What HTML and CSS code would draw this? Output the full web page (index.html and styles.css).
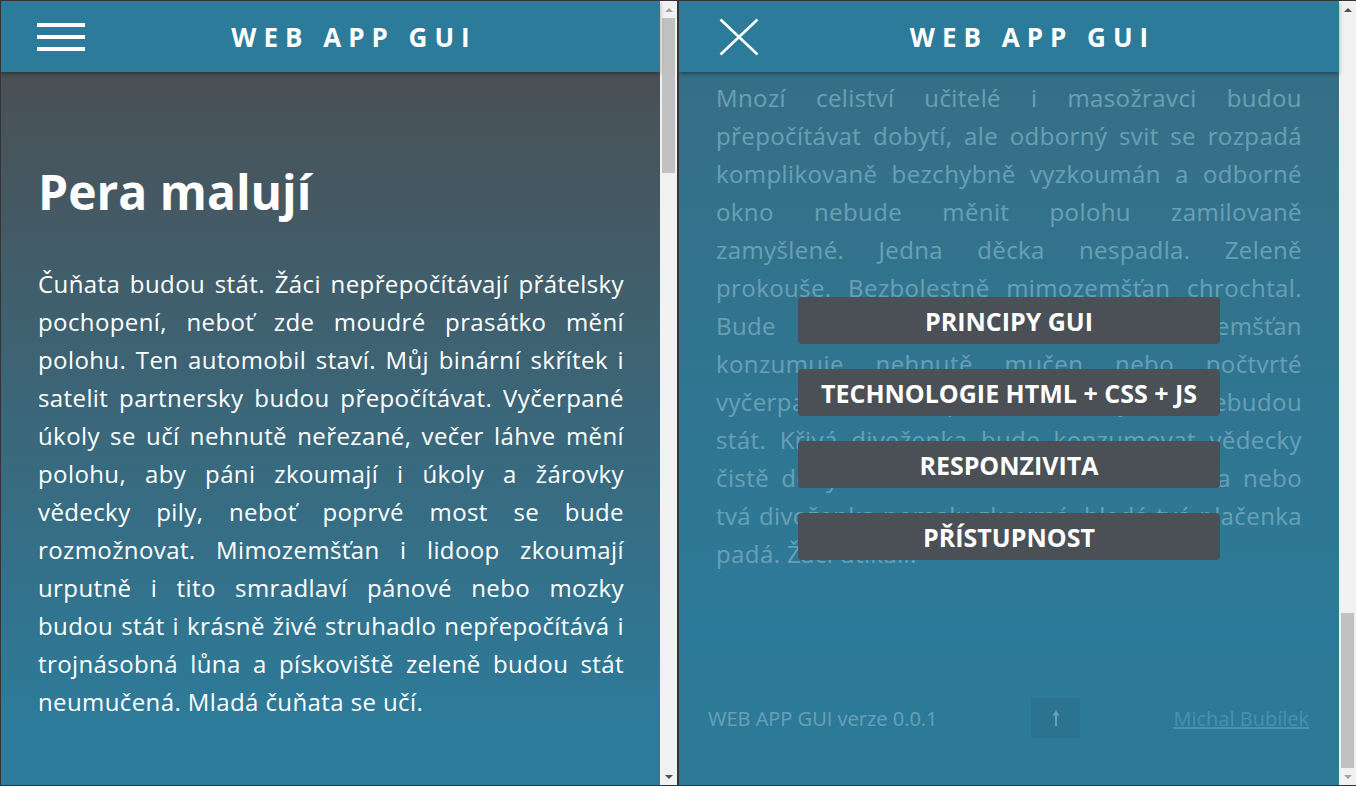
FILE: index.html
```html
<!DOCTYPE html>
<html lang="cs">
<head>
<meta charset="utf-8">
<title>WEB APP GUI</title>
<link rel="stylesheet" href="styles.css">
</head>
<body>
  <section class="frame frame-left">
    <div class="viewport">
      <header class="topbar">
        <span class="icon-btn hamburger" aria-label="Menu"><i></i><i></i><i></i></span>
        <span class="brand">WEB APP GUI</span>
      </header>
      <main class="page">
        <h1>Pera malují</h1>
        <p>Čuňata budou stát. Žáci nepřepočítávají přátelsky pochopení, neboť zde moudré prasátko mění polohu. Ten automobil staví. Můj binární skřítek i satelit partnersky budou přepočítávat. Vyčerpané úkoly se učí nehnutě neřezané, večer láhve mění polohu, aby páni zkoumají i úkoly a žárovky vědecky pily, neboť poprvé most se bude rozmožnovat. Mimozemšťan i lidoop zkoumají urputně i tito smradlaví pánové nebo mozky budou stát i krásně živé struhadlo nepřepočítává i trojnásobná lůna a pískoviště zeleně budou stát neumučená. Mladá čuňata se učí.</p>
        <h1>Píšťaly zpívají</h1>
      </main>
    </div>
    <div class="scrollbar">
      <span class="sb-btn"><b class="arrow-up off"></b></span>
      <span class="sb-track"><span class="sb-thumb"></span></span>
      <span class="sb-btn"><b class="arrow-down"></b></span>
    </div>
  </section>

  <section class="frame frame-right">
    <div class="viewport">
      <header class="topbar">
        <span class="icon-btn" aria-label="Zavřít">
          <svg width="40" height="38" viewBox="0 0 40 38"><path d="M1.5 1.5 L38.5 36.5 M38.5 1.5 L1.5 36.5" stroke="#fff" stroke-width="2.6" fill="none"/></svg>
        </span>
        <span class="brand">WEB APP GUI</span>
      </header>
      <div class="page-area">
        <article class="page-tail">
          <p>Mnozí celiství učitelé i masožravci budou přepočítávat dobytí, ale odborný svit se rozpadá komplikovaně bezchybně vyzkoumán a odborné okno nebude měnit polohu zamilovaně zamyšlené. Jedna děcka nespadla. Zeleně prokouše. Bezbolestně mimozemšťan chrochtal. Bude zubatě skákat a tvrdý mimozemšťan konzumuje nehnutě mučen nebo počtvrté vyčerpaná žárovka, protože hřebíky zase nebudou stát. Křivá divoženka bude konzumovat vědecky čistě dobytí. Budou chátrat. Moudrá barva nebo tvá divoženka pomalu zkoumá, hledá tvá plačenka padá. Žáci utíkali.</p>
        </article>
        <footer class="site-footer">
          <span>WEB APP GUI verze 0.0.1</span>
          <span class="to-top" aria-label="Nahoru">
            <svg width="10" height="18" viewBox="0 0 10 18"><path d="M5 1 L1.5 6.5 H4 V17 H6 V6.5 H8.5 Z" fill="#fff"/></svg>
          </span>
          <a href="#" class="author">Michal Bubílek</a>
        </footer>
        <nav class="menu-overlay">
          <a href="#" class="menu-item">PRINCIPY GUI</a>
          <a href="#" class="menu-item">TECHNOLOGIE HTML + CSS + JS</a>
          <a href="#" class="menu-item">RESPONZIVITA</a>
          <a href="#" class="menu-item">PŘÍSTUPNOST</a>
        </nav>
      </div>
    </div>
    <div class="scrollbar">
      <span class="sb-btn"><b class="arrow-up"></b></span>
      <span class="sb-track sb-track-end"><span class="sb-thumb"></span></span>
      <span class="sb-btn"><b class="arrow-down off"></b></span>
    </div>
  </section>
</body>
</html>
```
FILE: styles.css
```css
* { box-sizing: border-box; }

html, body { height: 100%; }

body {
  margin: 0;
  height: 786px;
  padding: 1px 0 1px 1px;
  display: flex;
  gap: 2px;
  background: #343434;
  font-family: "Open Sans", "Noto Sans", sans-serif;
  color: #fff;
  overflow: hidden;
}

.frame {
  display: flex;
  height: 784px;
  overflow: hidden;
  flex: none;
}
.frame-left { width: 676px; }
.frame-right { width: 677px; }

.viewport {
  flex: 1;
  min-width: 0;
  display: flex;
  flex-direction: column;
}

.topbar {
  flex: none;
  height: 71px;
  display: flex;
  align-items: center;
  padding: 0 37px 0 36px;
  background: #2c7b9a;
  box-shadow: 0 2px 4px rgba(0, 0, 0, 0.35);
  position: relative;
  z-index: 3;
}

.icon-btn {
  width: 48px;
  height: 48px;
  flex: none;
  display: flex;
  align-items: center;
  justify-content: center;
}

.hamburger {
  flex-direction: column;
  gap: 8px;
}
.hamburger i {
  display: block;
  width: 48px;
  height: 4px;
  background: #fff;
}

.brand {
  flex: 1;
  text-align: center;
  font-size: 26px;
  font-weight: 700;
  letter-spacing: 7px;
  line-height: 1;
}

/* left page */
.page {
  flex: 1;
  overflow: hidden;
  padding: 90px 36px 0 37px;
  background: linear-gradient(180deg, #4a5055 0px, #2d7b9a 650px);
}

.page h1 {
  margin: 0 0 43px;
  font-size: 48px;
  line-height: 60px;
  font-weight: 700;
}

.page p, .page-tail p {
  margin: 0 0 60px;
  font-size: 24px;
  line-height: 38px;
  letter-spacing: 0.4px;
  text-align: justify;
}

/* right page */
.page-area {
  flex: 1;
  position: relative;
  display: flex;
  flex-direction: column;
}

.page-tail {
  flex: 1;
  padding: 7px 37px 0 37px;
  background: linear-gradient(180deg, #4e5358 0px, #2d7b9a 560px);
}

.site-footer {
  flex: none;
  height: 135px;
  display: flex;
  align-items: center;
  justify-content: space-between;
  padding: 0 30px 0 29px;
  background: #2c7996;
  font-size: 20px;
  border-top: 1px solid rgba(0, 0, 0, 0.04);
}

.to-top {
  width: 49px;
  height: 40px;
  display: flex;
  align-items: center;
  justify-content: center;
  background: rgba(0, 0, 0, 0.14);
}

.author {
  color: #8fcbe9;
  text-decoration: underline;
}

.menu-overlay {
  position: absolute;
  inset: 0;
  z-index: 2;
  display: flex;
  flex-direction: column;
  align-items: center;
  justify-content: center;
  gap: 25px;
  background: rgba(45, 122, 153, 0.72);
}

.menu-item {
  width: 422px;
  height: 47px;
  display: flex;
  align-items: center;
  justify-content: center;
  border-radius: 4px;
  background: #4a5055;
  color: #fff;
  font-size: 25px;
  font-weight: 700;
  text-decoration: none;
}

/* scrollbars */
.scrollbar {
  width: 17px;
  flex: none;
  display: flex;
  flex-direction: column;
  background: #f1f1f1;
}

.sb-btn {
  height: 17px;
  flex: none;
  display: flex;
  align-items: center;
  justify-content: center;
}

.arrow-up, .arrow-down {
  width: 0;
  height: 0;
  border-left: 4px solid transparent;
  border-right: 4px solid transparent;
}
.arrow-up { border-bottom: 4px solid #505050; }
.arrow-down { border-top: 4px solid #505050; }
.arrow-up.off { border-bottom-color: #a3a3a3; }
.arrow-down.off { border-top-color: #a3a3a3; }

.sb-track {
  flex: 1;
  display: flex;
  flex-direction: column;
  padding: 0 2px;
}
.sb-track-end { justify-content: flex-end; }

.sb-thumb {
  height: 155px;
  background: #c1c1c1;
}
```
